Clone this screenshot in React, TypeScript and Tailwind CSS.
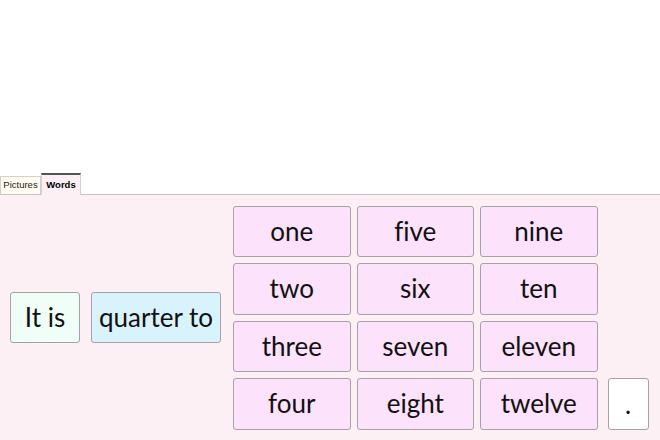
import React from "react";

const numbers = [
  "one", "five", "nine",
  "two", "six", "ten",
  "three", "seven", "eleven",
  "four", "eight", "twelve",
];

const wordFont = {
  fontFamily: "Lato, 'Open Sans', sans-serif",
  fontVariantLigatures: "none" as const,
};

const Card = ({ label, className }: { label: string; className: string }) => (
  <div
    className={`flex items-center justify-center rounded-[3px] border border-[#a7a0a6] text-[26px] leading-none text-[#111] ${className}`}
    style={wordFont}
  >
    <span className="-mt-[1px]">{label}</span>
  </div>
);

export default function App() {
  return (
    <div className="flex h-[440px] w-[660px] flex-col overflow-hidden bg-white">
      <div className="h-[173px]" />
      <div
        className="flex h-[22px] items-end border-b border-[#c9c4c9] text-[9.5px]"
        style={{ fontFamily: "'Liberation Sans', Arial, sans-serif" }}
      >
        <div className="flex h-[18px] w-[41px] items-center justify-center border border-b-0 border-[#d3cfd3] bg-[#fffdf2] text-[#222]">
          Pictures
        </div>
        <div className="-mb-px flex h-[22px] w-[40px] items-center justify-center border-x border-t-2 border-x-[#d3cfd3] border-t-[#555] bg-[#fdf0f5] font-bold text-black">
          Words
        </div>
      </div>
      <div className="flex flex-1 items-center bg-[#fdf0f5] pl-[10px]">
        <Card label="It is" className="h-[51px] w-[70px] bg-[#effef7]" />
        <Card label="quarter to" className="ml-[11px] h-[51px] w-[130px] bg-[#d9f3fd]" />
        <div className="ml-[12px] grid grid-cols-[117.5px_117.5px_117.5px] grid-rows-[51.5px_51.5px_51.5px_51.5px] gap-x-[6px] gap-y-[6px]">
          {numbers.map((n) => (
            <Card key={n} label={n} className="bg-[#fde2fb]" />
          ))}
        </div>
        <div className="mb-[10px] ml-[10px] self-end">
          <Card label="." className="h-[52px] w-[41px] bg-white" />
        </div>
      </div>
    </div>
  );
}
